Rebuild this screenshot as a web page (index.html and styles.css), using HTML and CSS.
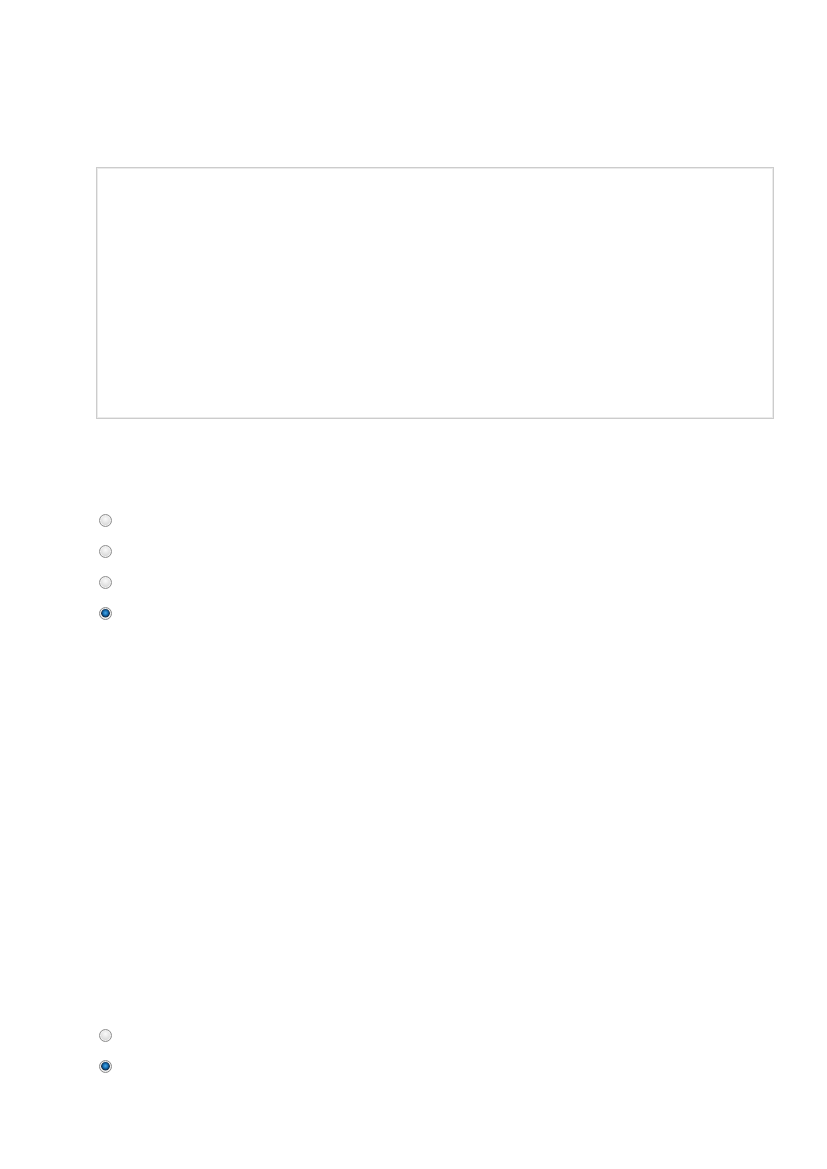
FILE: index.html
```html
<html>

<head>
  <title>Form</title>
  <link rel="stylesheet" href="styles.css">
</head>

<body>
  <div class="page">
    <textarea class="notes"></textarea>

    <div class="choices first">
      <label class="choice"><input type="radio" name="q1"></label>
      <label class="choice"><input type="radio" name="q1"></label>
      <label class="choice"><input type="radio" name="q1"></label>
      <label class="choice"><input type="radio" name="q1" checked></label>
    </div>

    <div class="choices second">
      <label class="choice"><input type="radio" name="q2"></label>
      <label class="choice"><input type="radio" name="q2" checked></label>
    </div>
  </div>
</body>

</html>
```

FILE: styles.css
```css
body {
  margin: 0;
  background: #fff;
  font-family: "Liberation Sans", Arial, sans-serif;
}

.page {
  padding: 167px 53px 0 96px;
}

.notes {
  display: block;
  width: 678px;
  height: 252px;
  margin: 0;
  padding: 0;
  border: 1px solid #cccccc;
  box-shadow: inset 1px 1px 0 #ebebeb, inset -1px -1px 0 #ebebeb;
  resize: none;
  outline: none;
  box-sizing: border-box;
}

.choices {
  display: flex;
  flex-direction: column;
  padding-left: 3px;
}

.choices.first {
  margin-top: 86px;
}

.choices.second {
  margin-top: 391px;
}

.choice {
  display: flex;
  align-items: center;
  height: 31px;
}

.choice input {
  appearance: none;
  -webkit-appearance: none;
  width: 13px;
  height: 13px;
  margin: 0;
  border-radius: 50%;
  border: 1px solid #8e8e8e;
  background: radial-gradient(circle at 50% 35%, #fafafa 0%, #e2e2e2 50%, #c4c4c4 100%);
  box-shadow: inset 0 0 0 1px #f2f2f2;
  box-sizing: border-box;
}

.choice input:checked {
  border-color: #8a8a8a;
  background: radial-gradient(circle at 50% 45%, #49a8e6 0%, #1670b5 28%, #0d4a7e 40%, #1b2f45 50%, #e6e6e6 60%, #cdcdcd 100%);
}
```
